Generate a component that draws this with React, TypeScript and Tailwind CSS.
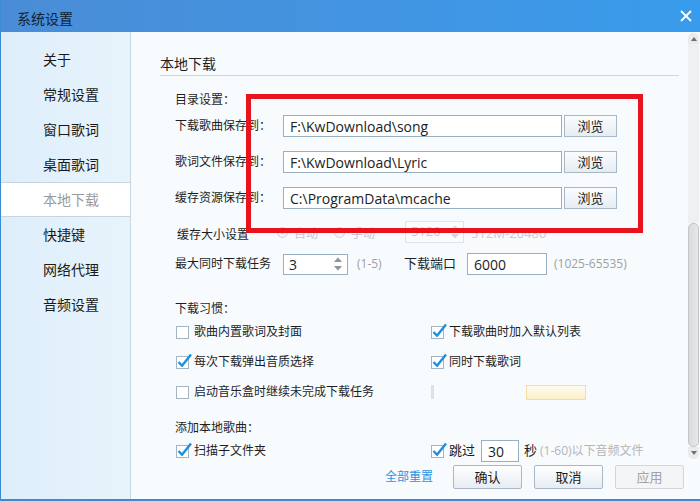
import React from "react";

const MENU = ["关于", "常规设置", "窗口歌词", "桌面歌词", "本地下载", "快捷键", "网络代理", "音频设置"];

const PATHS = [
  { label: "下载歌曲保存到：", value: "F:\\KwDownload\\song" },
  { label: "歌词文件保存到：", value: "F:\\KwDownload\\Lyric" },
  { label: "缓存资源保存到：", value: "C:\\ProgramData\\mcache" },
];

function Check({ on }: { on?: boolean }) {
  return (
    <span className="relative ml-[1px] inline-block h-[13px] w-[13px] shrink-0 border border-[#a3b4c2] bg-white">
      {on && (
        <svg className="absolute -top-[4px] -left-[1px] h-[16px] w-[17px]" viewBox="0 0 17 16">
          <path d="M2.5 9 L6 12.8 L15 1.5" fill="none" stroke="#1e8fdc" strokeWidth="2.4" strokeLinejoin="round" />
        </svg>
      )}
    </span>
  );
}

function Radio({ dot }: { dot?: boolean }) {
  return (
    <span className="flex h-[11px] w-[11px] shrink-0 items-center justify-center rounded-full border border-[#cfd4d8] bg-[#f3f5f6]">
      {dot && <span className="h-[3px] w-[3px] rounded-full bg-[#c9ced2]" />}
    </span>
  );
}

function SpinArrows({ dim }: { dim?: boolean }) {
  const c = dim ? "#d2d6d9" : "#8796a1";
  return (
    <svg className="h-[16px] w-[8px]" viewBox="0 0 8 16">
      <path d="M0 6 L4 1.5 L8 6 Z" fill={c} />
      <path d="M0 10 L4 14.5 L8 10 Z" fill={c} />
    </svg>
  );
}

function Btn({ children, disabled }: { children: React.ReactNode; disabled?: boolean }) {
  return (
    <button
      className={
        disabled
          ? "h-[24px] w-[69px] rounded-[2px] border border-[#d3d6d9] bg-[#f4f5f6] text-[13px] leading-none text-[#a3a3a3]"
          : "h-[24px] w-[69px] rounded-[2px] border border-[#a9b8c4] bg-gradient-to-b from-[#ffffff] to-[#e6edf3] text-[13px] leading-none text-[#1a1a1a]"
      }
    >
      {children}
    </button>
  );
}

export default function App() {
  return (
    <div className="flex h-[501px] w-[700px] flex-col overflow-hidden border-b-2 border-l border-[#3b8ad6] font-['Open_Sans','Noto_Sans_CJK_SC',sans-serif] text-[#1e1e1e]">
      {/* title bar */}
      <div className="flex h-[32px] shrink-0 items-center justify-between bg-gradient-to-r from-[#4a8dd6] to-[#389bec] pl-[16px] pr-[8px]">
        <span className="pt-[5px] text-[14px] leading-none text-[#102236]">系统设置</span>
        <svg className="h-[12px] w-[12px]" viewBox="0 0 12 12">
          <path d="M1 1 L11 11 M11 1 L1 11" stroke="#ffffff" strokeWidth="1.8" />
        </svg>
      </div>

      <div className="flex min-h-0 flex-1">
        {/* sidebar */}
        <div className="w-[130px] shrink-0 border-r border-[#c9d8e5] bg-gradient-to-r from-[#ddeefb] to-[#e8f4fc] pt-[10px]">
          {MENU.map((m) => (
            <div
              key={m}
              className={
                m === "本地下载"
                  ? "flex h-[35px] items-center border-y border-[#c7d5e1] bg-white pl-[42px] text-[14px] text-[#9a9a9a]"
                  : "flex h-[35px] items-center pl-[42px] text-[14px] text-[#1a1a1a]"
              }
            >
              {m}
            </div>
          ))}
        </div>

        {/* content */}
        <div className="relative flex min-w-0 flex-1 flex-col bg-[#f7fbfe]">
          <div className="flex min-h-0 flex-1">
            <div className="min-w-0 flex-1 pl-[29px] pt-[21px]">
              <div className="mr-[9px] h-[23px] border-b border-[#cfd6dd] text-[14px] leading-[22px]">本地下载</div>

              <div className="pl-[15px] text-[12px]">
                <div className="mt-[15px] h-[18px] leading-[18px]">目录设置：</div>
                {PATHS.map((p, i) => (
                  <div key={p.label} className={i === 0 ? "mt-[6px] flex h-[22px] items-center" : "mt-[14px] flex h-[22px] items-center"}>
                    <span className="w-[108px] shrink-0">{p.label}</span>
                    <div className="flex h-[22px] w-[279px] items-center border border-[#98afc1] bg-white pl-[6px] text-[14px] text-[#222]">
                      {p.value}
                    </div>
                    <button className="ml-[2px] h-[22px] w-[53px] border border-[#a9b8c5] bg-gradient-to-b from-[#fbfdff] to-[#e5ecf2] text-[13px] leading-none">
                      浏览
                    </button>
                  </div>
                ))}

                <div className="mt-[12px] flex h-[22px] items-center">
                  <span className="w-[102px] shrink-0 pl-[2px] pt-[6px]">缓存大小设置</span>
                  <Radio dot />
                  <span className="ml-[6px] w-[40px] pt-[4px] text-[#c4c8cc]">自动</span>
                  <Radio />
                  <span className="ml-[6px] w-[54px] pt-[4px] text-[#c4c8cc]">手动</span>
                  <div className="flex h-[22px] w-[59px] items-center justify-between border border-[#dfe3e6] bg-[#fafbfc] pl-[5px] pr-[4px] text-[13px] text-[#c8ccd0]">
                    5120
                    <SpinArrows dim />
                  </div>
                  <span className="ml-[7px] pt-[4px] text-[13px] text-[#c9cdd1]">512M-20480</span>
                </div>

                <div className="mt-[10px] flex h-[22px] items-center">
                  <span className="w-[108px] shrink-0">最大同时下载任务</span>
                  <div className="flex h-[21px] w-[65px] items-center justify-between border border-[#98afc1] bg-white pl-[5px] pr-[5px] text-[14px]">
                    3
                    <SpinArrows />
                  </div>
                  <span className="w-[56px] pl-[9px] text-[12px] text-[#a0a0a0]">(1-5)</span>
                  <span className="w-[63px] text-[13px]">下载端口</span>
                  <div className="flex h-[22px] w-[80px] items-center border border-[#98afc1] bg-white pl-[6px] text-[14px]">6000</div>
                  <span className="ml-[7px] text-[12px] text-[#a0a0a0]">(1025-65535)</span>
                </div>

                <div className="mt-[25px] h-[18px] leading-[18px]">下载习惯：</div>
                <div className="mt-[4px] grid grid-cols-[255px_1fr] gap-y-[10px]">
                  <label className="flex h-[20px] items-center gap-[5px]">
                    <Check />
                    歌曲内置歌词及封面
                  </label>
                  <label className="flex h-[20px] items-center gap-[5px]">
                    <Check on />
                    下载歌曲时加入默认列表
                  </label>
                  <label className="flex h-[20px] items-center gap-[5px]">
                    <Check on />
                    每次下载弹出音质选择
                  </label>
                  <label className="flex h-[20px] items-center gap-[5px]">
                    <Check on />
                    同时下载歌词
                  </label>
                  <label className="flex h-[20px] items-center gap-[5px]">
                    <Check />
                    启动音乐盒时继续未完成下载任务
                  </label>
                  <div className="flex h-[20px] items-center">
                    <span className="ml-[1px] h-[14px] w-[3px] bg-[#dde2e6]" />
                    <span className="ml-[92px] h-[15px] w-[60px] border border-[#f6dca3] bg-gradient-to-b from-[#fffaf0] to-[#fdf0c8]" />
                  </div>
                </div>

                <div className="mt-[17px] h-[18px] leading-[18px]">添加本地歌曲：</div>
                <div className="mt-[3px] grid h-[22px] grid-cols-[255px_1fr] items-center">
                  <label className="flex items-center gap-[5px]">
                    <Check on />
                    扫描子文件夹
                  </label>
                  <div className="flex items-center">
                    <Check on />
                    <span className="ml-[5px] w-[32px] text-[13px]">跳过</span>
                    <div className="flex h-[22px] w-[38px] items-center border border-[#98afc1] bg-white pl-[6px] text-[14px]">30</div>
                    <span className="ml-[5px] text-[13px]">秒</span>
                    <span className="ml-[3px] text-[12px] text-[#b5b5b5]">(1-60)以下音频文件</span>
                  </div>
                </div>
              </div>
            </div>

            {/* scrollbar */}
            <div className="mr-[1px] flex w-[11px] shrink-0 flex-col pb-[4px] pt-[1px]">
              <div className="flex h-[11px] items-center justify-center rounded-t-[5px] bg-[#e9ebed]">
                <svg className="h-[4px] w-[6px]" viewBox="0 0 6 4">
                  <path d="M0 4 L3 0 L6 4 Z" fill="#6f6f6f" />
                </svg>
              </div>
              <div className="h-[179px] bg-[#eef0f2]" />
              <div className="flex-1 rounded-[5px] border border-[#c3c6c9] bg-gradient-to-r from-[#d9dbdd] to-[#e6e8ea]" />
              <div className="flex h-[12px] items-center justify-center rounded-b-[5px] bg-[#e9ebed]">
                <svg className="h-[4px] w-[6px]" viewBox="0 0 6 4">
                  <path d="M0 0 L3 4 L6 0 Z" fill="#6f6f6f" />
                </svg>
              </div>
            </div>
          </div>

          {/* footer */}
          <div className="flex h-[36px] shrink-0 items-start justify-end gap-[12px] pr-[16px] pt-[2px]">
            <span className="mr-[8px] pt-[3px] text-[12px] leading-[18px] text-[#2b93e0]">全部重置</span>
            <Btn>确认</Btn>
            <Btn>取消</Btn>
            <Btn disabled>应用</Btn>
          </div>

          {/* red annotation frame */}
          <div className="pointer-events-none absolute left-[115px] top-[62px] h-[139px] w-[397px] border-[5px] border-[#e7141e]" />
        </div>
      </div>
    </div>
  );
}
